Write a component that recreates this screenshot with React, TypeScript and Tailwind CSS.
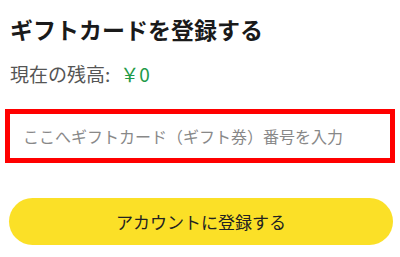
export default function App() {
  return (
    <div className="w-[400px] h-[257px] bg-white overflow-hidden font-['Noto_Sans_CJK_JP','Noto_Sans',sans-serif]">
      <div className="pt-[15px] pl-[10px]">
        <h1 className="text-[23px] leading-[28px] font-bold text-[#1a1a1a]">ギフトカードを登録する</h1>
        <p className="mt-[19px] text-[19px] leading-[24px] text-[#555]">
          現在の残高:<span className="ml-[10px] text-[#1f9a48]">￥0</span>
        </p>
      </div>
      <div className="mt-[23px] mx-[5px] h-[54px] border-[5px] border-[#ff0000] flex items-center pl-[13px] pr-[8px]">
        <input
          className="w-full p-0 outline-none bg-transparent text-[16px] text-[#333] placeholder:text-[#888]"
          placeholder="ここへギフトカード（ギフト券）番号を入力"
        />
      </div>
      <button className="mt-[35px] ml-[9px] w-[384px] h-[47px] rounded-full bg-[#fbe027] text-[17px] text-[#222] flex items-center justify-center">
        アカウントに登録する
      </button>
    </div>
  )
}
